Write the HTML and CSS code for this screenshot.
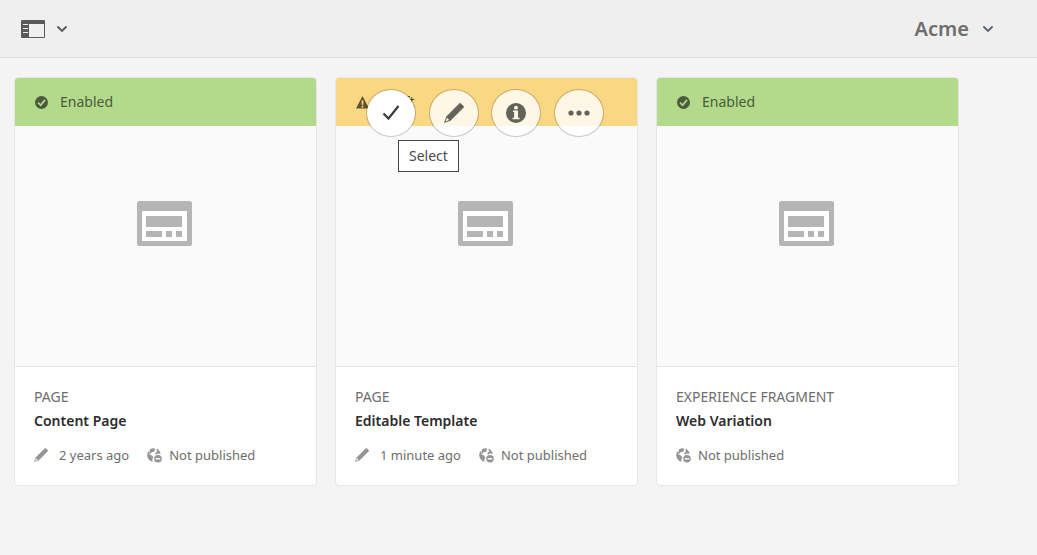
FILE: index.html
```
<!DOCTYPE html>
<html lang="en">
<head>
<meta charset="utf-8">
<meta name="viewport" content="width=device-width, initial-scale=1">
<title>Acme</title>
<link rel="stylesheet" href="styles.css">
</head>
<body>
<svg class="sprite" aria-hidden="true">
  <symbol id="chevron" viewBox="0 0 12 8"><path d="M2 2 6 6l4-4" fill="none" stroke="currentColor" stroke-width="1.900" stroke-linecap="round"/></symbol>
  <symbol id="rail" viewBox="0 0 24 18"><path fill-rule="evenodd" fill="currentColor" d="M1 0h22a1 1 0 0 1 1 1v16a1 1 0 0 1-1 1H1a1 1 0 0 1-1-1V1a1 1 0 0 1 1-1zM8 4v13h15V4zM2 4v1h5V4zM2 8v1h5V8zM2 12v1h5v-1z"/></symbol>
  <symbol id="enabled" viewBox="0 0 12 12"><circle cx="6" cy="6" r="6" fill="currentColor"/><path d="M2.800 6.200 5.200 8.600 9.200 3.600" fill="none" stroke="#b3da8b" stroke-width="1.600"/></symbol>
  <symbol id="warning" viewBox="0 0 12 12"><path fill="currentColor" fill-rule="evenodd" d="M6 0 12 11.500H0zM5.200 4v4h1.600V4zM5.200 9v1.500h1.600V9z"/></symbol>
  <symbol id="page" viewBox="0 0 55 45"><rect width="55" height="45" rx="2.500" fill="#b5b5b5"/><path fill="#fff" d="M5 10h45v30H5z"/><path fill="#b5b5b5" d="M9 15h36v11H9zM9 30h16v6H9zM29 30h6v6h-6zM39 30h6v6h-6z"/></symbol>
  <symbol id="pencil" viewBox="0 0 20 20"><path fill="currentColor" fill-rule="evenodd" d="M15.500.3q.6-.5 1.200 0L19.700 3.300q.5.600 0 1.200L6.500 17.700 0 20 2.300 13.500zM3 14.800 1.600 18.400 5.200 17z"/></symbol>
  <symbol id="check" viewBox="0 0 18 16"><path d="M1.500 8.500 6.500 13.500 16.500 1" fill="none" stroke="currentColor" stroke-width="2.200"/></symbol>
  <symbol id="info" viewBox="0 0 20 20"><circle cx="10" cy="10" r="10" fill="currentColor"/><circle cx="10" cy="4.700" r="1.900" fill="#fff5e2"/><path fill="#fff5e2" d="M7 7.500h5v7.200h1.600v1.600H6.500v-1.600h1.600V9.100H7z"/></symbol>
  <symbol id="more" viewBox="0 0 22 6"><g fill="currentColor"><circle cx="3" cy="3" r="2.600"/><circle cx="11" cy="3" r="2.600"/><circle cx="19" cy="3" r="2.600"/></g></symbol>
  <symbol id="globe" viewBox="0 0 15 15"><g fill="currentColor"><path d="M1.500 3Q0 5 .2 7.500.8 12.500 5.600 13.800L5.300 11.500 6.300 9.300 4.500 7.300 2.500 6.500z"/><path d="M3 1.400Q5 0 7.500.3L8 2.200 6.500 4 4.300 4.200 3.800 6 2.200 5z"/><path d="M9.300.6Q13.200 2.200 13.600 6.100L11 5.500 9 6.800 8.200 5.500 10 3.500z"/><circle cx="11" cy="10.800" r="3.800"/></g><path fill="#fff" d="M8.700 10.100h4.600v1.400H8.700z"/></symbol>
</svg>

<header class="topbar">
  <button class="rail-toggle" type="button" aria-label="Toggle side panel">
    <svg class="icon-rail"><use href="#rail"/></svg>
    <svg class="icon-chevron"><use href="#chevron"/></svg>
  </button>
  <button class="crumb" type="button">Acme <svg class="icon-chevron" aria-hidden="true"><use href="#chevron"/></svg></button>
</header>

<main class="cards">
  <article class="card">
    <div class="status status-enabled"><svg class="icon-status"><use href="#enabled"/></svg>Enabled</div>
    <div class="preview"><svg class="icon-page"><use href="#page"/></svg></div>
    <div class="details">
      <p class="kind">PAGE</p>
      <h2 class="title">Content Page</h2>
      <ul class="meta">
        <li class="meta-edited"><svg class="icon-pencil"><use href="#pencil"/></svg>2 years ago</li>
        <li class="meta-item"><svg class="icon-globe"><use href="#globe"/></svg>Not published</li>
      </ul>
    </div>
  </article>

  <article class="card">
    <div class="status status-draft"><svg class="icon-status"><use href="#warning"/></svg>Draft</div>
    <div class="preview"><svg class="icon-page"><use href="#page"/></svg></div>
    <div class="details">
      <p class="kind">PAGE</p>
      <h2 class="title">Editable Template</h2>
      <ul class="meta">
        <li class="meta-edited"><svg class="icon-pencil"><use href="#pencil"/></svg>1 minute ago</li>
        <li class="meta-item"><svg class="icon-globe"><use href="#globe"/></svg>Not published</li>
      </ul>
    </div>
    <div class="actions">
      <button class="action action-active" type="button" aria-label="Select" aria-describedby="select-tip"><svg class="icon-check"><use href="#check"/></svg></button>
      <button class="action" type="button" aria-label="Edit"><svg class="icon-action"><use href="#pencil"/></svg></button>
      <button class="action" type="button" aria-label="Properties"><svg class="icon-action"><use href="#info"/></svg></button>
      <button class="action" type="button" aria-label="More"><svg class="icon-more"><use href="#more"/></svg></button>
    </div>
    <div class="tooltip" id="select-tip" role="tooltip">Select</div>
  </article>

  <article class="card">
    <div class="status status-enabled"><svg class="icon-status"><use href="#enabled"/></svg>Enabled</div>
    <div class="preview"><svg class="icon-page"><use href="#page"/></svg></div>
    <div class="details">
      <p class="kind">EXPERIENCE FRAGMENT</p>
      <h2 class="title">Web Variation</h2>
      <ul class="meta">
        <li class="meta-item"><svg class="icon-globe"><use href="#globe"/></svg>Not published</li>
      </ul>
    </div>
  </article>
</main>
</body>
</html>
```

FILE: styles.css
```
* { box-sizing: border-box; }

body {
  margin: 0;
  background: #f4f4f4;
  color: #6e6e6e;
  font: 14px/20px "Noto Sans", "Open Sans", sans-serif;
}

svg { display: block; flex: none; }
.sprite { position: absolute; width: 0; height: 0; }

button {
  display: flex;
  align-items: center;
  padding: 0;
  border: 0;
  background: none;
  color: inherit;
  font: inherit;
  cursor: pointer;
}

.topbar {
  display: flex;
  align-items: center;
  justify-content: space-between;
  height: 58px;
  padding: 0 43px 0 21px;
  border-bottom: 1px solid #dcdcdc;
  background: #efefef;
}

.rail-toggle { gap: 11px; color: #5a5a5a; }
.crumb { gap: 13px; font-size: 20px; font-weight: 600; line-height: 28px; }
.icon-rail { width: 24px; height: 18px; }
.icon-chevron { width: 12px; height: 8px; }
.crumb .icon-chevron { color: #5b6670; }

.cards {
  display: grid;
  grid-template-columns: repeat(auto-fill, minmax(280px, 1fr));
  gap: 18px;
  padding: 19px 78px 19px 14px;
}

.card {
  position: relative;
  border: 1px solid #e6e6e6;
  border-radius: 4px;
  background: #fff;
}

.status {
  display: flex;
  align-items: center;
  gap: 12px;
  height: 48px;
  padding: 0 20px;
  border-radius: 3px 3px 0 0;
  color: #4b5a3c;
}

.status-enabled { background: #b3da8b; }
.status-draft { background: #fad783; color: #5f512f; }
.icon-status { width: 13px; height: 13px; }

.preview {
  display: flex;
  justify-content: center;
  height: 241px;
  padding: 75px 2px 0 0;
  border-bottom: 1px solid #e6e6e6;
  background: #fafafa;
}

.icon-page { width: 55px; height: 45px; }

.details { padding: 20px 19px; }
.kind, .title, .meta { margin: 0; }
.title { margin-top: 4px; color: #2c2c2c; font-size: 14px; font-weight: 600; line-height: 20px; }

.meta {
  display: flex;
  gap: 18px;
  margin-top: 14px;
  padding: 0;
  font-size: 13px;
  list-style: none;
}

.meta-edited, .meta-item { display: flex; align-items: center; gap: 7px; white-space: nowrap; }
.meta-edited { gap: 11px; }
.icon-pencil { width: 14px; height: 14px; color: #959595; }
.icon-globe { width: 15px; height: 15px; color: #959595; }

.actions {
  position: absolute;
  top: 11px;
  left: 30px;
  display: flex;
  justify-content: space-between;
  width: 238px;
}

.action {
  justify-content: center;
  width: 50px;
  height: 48px;
  border: 1px solid rgba(0, 0, 0, 0.2);
  border-radius: 50%;
  background: rgba(255, 255, 255, 0.8);
  background-clip: padding-box;
  color: #65625a;
}

.action-active { background-color: #fff; color: #3c3c3c; }
.icon-check { width: 18px; height: 16px; }
.icon-action { width: 20px; height: 20px; }
.icon-more { width: 22px; height: 6px; }

.tooltip {
  position: absolute;
  top: 62px;
  left: 62px;
  padding: 5px 10px;
  border: 1px solid #444;
  background: #fff;
  color: #4b4b4b;
}
```
